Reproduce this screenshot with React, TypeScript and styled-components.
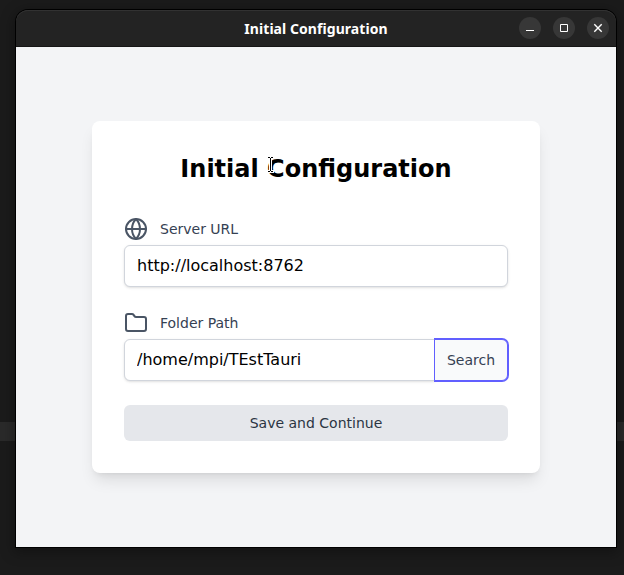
import React from "react";
import styled, { createGlobalStyle } from "styled-components";
import { Folder, Globe } from "lucide-react";

const GlobalStyle = createGlobalStyle`
  * { box-sizing: border-box; }
  body { margin: 0; }
  button, input { font: inherit; margin: 0; }
`;

const Desktop = styled.div`
  width: 624px;
  height: 575px;
  padding: 10px 8px 28px 16px;
  overflow: hidden;
  background: linear-gradient(#1b1b1b 422px, #2a2a2a 422px, #2a2a2a 441px, #1b1b1b 441px);
  font-family: "DejaVu Sans", sans-serif;
`;

const Window = styled.div`
  display: flex;
  flex-direction: column;
  width: 600px;
  height: 537px;
  border-radius: 12px 12px 0 0;
  box-shadow: 0 0 0 1px #000, 0 3px 14px 2px rgba(0, 0, 0, 0.35);
`;

const TitleBar = styled.header`
  display: grid;
  grid-template-columns: 1fr auto 1fr;
  align-items: center;
  flex: none;
  height: 37px;
  padding: 0 7px;
  border-radius: 12px 12px 0 0;
  border-bottom: 1px solid #161616;
  background: #232323;
  box-shadow: inset 0 1px #323232;
`;

const WindowTitle = styled.div`
  grid-column: 2;
  padding-top: 2px;
  color: #fff;
  font: 700 14px/20px "Noto Sans", sans-serif;
  letter-spacing: 0.06px;
  white-space: nowrap;
`;

const WindowControls = styled.div`
  display: flex;
  justify-content: flex-end;
  gap: 12px;
`;

const ControlButton = styled.button`
  display: block;
  width: 22px;
  height: 22px;
  padding: 0;
  border: 0;
  border-radius: 50%;
  background: #373737;
  svg { display: block; }
`;

const Content = styled.main`
  display: flex;
  flex: 1;
  align-items: center;
  justify-content: center;
  background: #f3f4f6;
`;

const Card = styled.section`
  width: 448px;
  height: 352px;
  padding: 32px;
  border-radius: 8px;
  background: #fff;
  box-shadow: 0 10px 15px -3px rgba(0, 0, 0, 0.1), 0 4px 6px -4px rgba(0, 0, 0, 0.1);
`;

const Heading = styled.h1`
  position: relative;
  margin: 0 0 32px;
  color: #000;
  font-size: 24px;
  font-weight: 700;
  line-height: 32px;
  text-align: center;
`;

const PointerMark = styled.svg`
  position: absolute;
  left: 142px;
  top: 3px;
`;

const Field = styled.div`
  margin-bottom: 24px;
`;

const Label = styled.label`
  display: flex;
  align-items: center;
  gap: 12px;
  height: 24px;
  margin-bottom: 4px;
  color: #364153;
  font-size: 14px;
  line-height: 20px;
  svg { color: #4a5565; }
`;

const InputRow = styled.div`
  display: flex;
`;

const TextInput = styled.input<{ $joined?: boolean }>`
  flex: 1;
  min-width: 0;
  height: 42px;
  padding: 7px 12px 9px;
  border: 1px solid #d1d5dc;
  border-radius: ${(p) => (p.$joined ? "6px 0 0 6px" : "6px")};
  outline: none;
  background: #fff;
  color: #000;
  font-size: 16px;
  line-height: 24px;
  box-shadow: 0 1px 3px rgba(0, 0, 0, 0.1), 0 1px 2px -1px rgba(0, 0, 0, 0.1);
`;

const SearchButton = styled.button`
  position: relative;
  flex: none;
  width: 74px;
  height: 42px;
  margin-left: -1px;
  padding: 0;
  border: 1px solid #615fff;
  border-radius: 0 6px 6px 0;
  background: #f9fafb;
  color: #364153;
  font-size: 14px;
  line-height: 20px;
  box-shadow: 0 0 0 1px #615fff;
  clip-path: inset(-1px -1px -1px 0);
`;

const SaveButton = styled.button`
  display: block;
  width: 100%;
  height: 36px;
  padding: 0;
  border: 0;
  border-radius: 6px;
  background: #e5e7eb;
  color: #2b3543;
  font-size: 14px;
  line-height: 20px;
`;

export default function App() {
  return (
    <>
      <GlobalStyle />
      <Desktop>
        <Window>
          <TitleBar>
            <WindowTitle>Initial Configuration</WindowTitle>
            <WindowControls>
              <ControlButton aria-label="Minimize">
                <svg width="22" height="22"><path d="M7 13.5h8" stroke="#fff" /></svg>
              </ControlButton>
              <ControlButton aria-label="Maximize">
                <svg width="22" height="22"><path d="M7.5 7.5h7v7h-7z" fill="none" stroke="#fff" /></svg>
              </ControlButton>
              <ControlButton aria-label="Close">
                <svg width="22" height="22"><path d="M7.3 7.3l7.4 7.4M14.7 7.3l-7.4 7.4" stroke="#fff" strokeWidth="1.4" /></svg>
              </ControlButton>
            </WindowControls>
          </TitleBar>
          <Content>
            <Card>
              <Heading>
                Initial Configuration
                <PointerMark width="9" height="18" viewBox="0 0 9 18" fill="none">
                  <path d="M1 1.5h7M4.5 1v15M1 15.5h7" stroke="#fff" strokeWidth="3" />
                  <path d="M2 1.5h2M5 1.5h2M4.5 2v13M2 15.5h2M5 15.5h2" stroke="#000" />
                </PointerMark>
              </Heading>
              <Field>
                <Label htmlFor="server"><Globe size={24} />Server URL</Label>
                <InputRow><TextInput id="server" defaultValue="http://localhost:8762" spellCheck={false} /></InputRow>
              </Field>
              <Field>
                <Label htmlFor="folder"><Folder size={24} />Folder Path</Label>
                <InputRow>
                  <TextInput id="folder" $joined defaultValue="/home/mpi/TEstTauri" spellCheck={false} />
                  <SearchButton>Search</SearchButton>
                </InputRow>
              </Field>
              <SaveButton>Save and Continue</SaveButton>
            </Card>
          </Content>
        </Window>
      </Desktop>
    </>
  );
}
